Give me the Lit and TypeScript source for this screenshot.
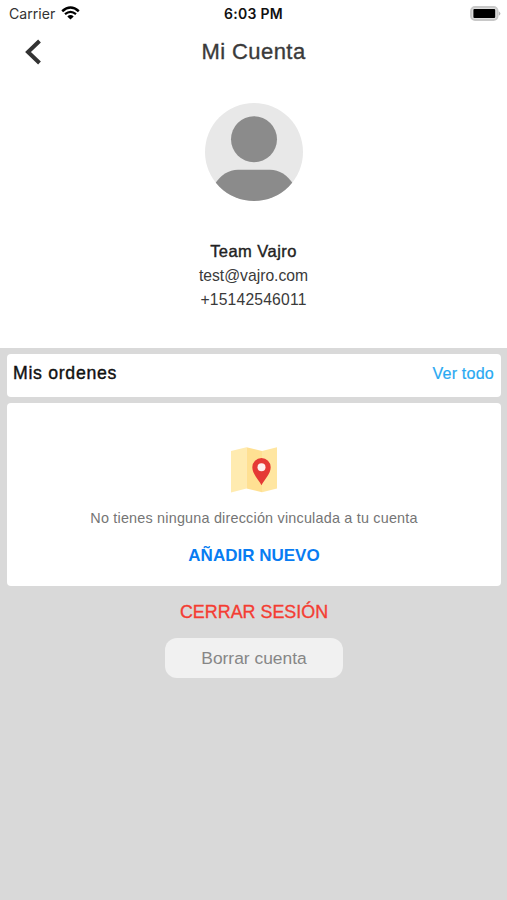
import { LitElement, html, css, svg } from "lit";
import { customElement } from "lit/decorators.js";

const wifi = html`<svg class="wifi" viewBox="0 0 19 14" width="19" height="14">
  ${svg`<path d="M1.2 5.2Q9.5 -2.2 17.8 5.2" fill="none" stroke="#000" stroke-width="2.5"/>
  <path d="M4 8.2Q9.5 3.4 15 8.2" fill="none" stroke="#000" stroke-width="2.2"/>
  <path d="M6.3 10.5Q9.5 7.7 12.7 10.5L9.5 13.6Z" fill="#000"/>`}
</svg>`;

const battery = html`<svg class="battery" viewBox="0 0 31 15" width="31" height="15">
  ${svg`<rect x="1" y="1" width="26.6" height="13" rx="4" fill="#dedede" stroke="#c8c8c8" stroke-width="1.8"/>
  <rect x="3.4" y="3.1" width="21.8" height="8.8" rx="1" fill="#000"/>
  <path d="M28.8 5.2Q32 7.5 28.8 9.8Z" fill="#b5b5b5"/>`}
</svg>`;

const avatar = html`<svg class="avatar" viewBox="0 0 98 98" width="98" height="98">
  ${svg`<defs><clipPath id="disc"><circle cx="49" cy="49" r="49"/></clipPath></defs>
  <circle cx="49" cy="49" r="49" fill="#e8e8e8"/>
  <circle cx="49" cy="36.2" r="23" fill="#8b8b8b"/>
  <path clip-path="url(#disc)" d="M9 82Q19 66.7 33 66.7H65Q79 66.7 89 82V98H9Z" fill="#8b8b8b"/>`}
</svg>`;

const map = html`<svg class="map" viewBox="0 0 46 46" width="46" height="46">
  ${svg`<path d="M0 4L15.5 .3V41.5L0 45.5Z" fill="#ffebb0"/>
  <path d="M15.5 .3L31 4V45.3L15.5 41.5Z" fill="#ffe092"/>
  <path d="M31 4L46 .3V41.5L31 45.3Z" fill="#ffe6a1"/>
  <path d="M30.5 38.3C28 33 21.3 27 21.3 20.3A9.2 9.2 0 0 1 39.7 20.3C39.7 27 33 33 30.5 38.3Z" fill="#e53935"/>
  <circle cx="30.5" cy="20.2" r="4" fill="#fff0ee"/>`}
</svg>`;

@customElement("app-root")
export class AppRoot extends LitElement {
  static styles = css`
    :host {
      display: flex;
      flex-direction: column;
      height: 900px;
      background: #d9d9d9;
      font-family: "Liberation Sans", Arial, sans-serif;
      color: #3a3a3a;
      white-space: nowrap;
    }
    svg { display: block; flex: none; }
    .profile { height: 348px; background: #fff; display: flex; flex-direction: column; }
    .row { display: grid; grid-template-columns: 1fr auto 1fr; align-items: center; }
    .status { height: 27px; font-family: Inter, sans-serif; }
    .carrier { display: flex; align-items: center; gap: 6px; padding-left: 9px; color: #333; font-size: 14.1px; }
    .wifi { margin-top: -2px; }
    .time { color: #111; font-weight: 600; font-size: 14px; letter-spacing: .3px; }
    .battery { justify-self: end; margin-right: 6px; }
    .nav { height: 50px; }
    .back { margin-left: 24px; }
    .title { margin: 0; font-size: 22px; font-weight: 400; letter-spacing: .43px; -webkit-text-stroke: .35px; }
    .person { display: flex; flex-direction: column; align-items: center; text-align: center; }
    .avatar { margin: 26px 0 37.5px; }
    .line { line-height: 24.3px; font-size: 15.7px; }
    .mail { padding-top: 1px; }
    .phone { letter-spacing: .18px; }
    .name { font-size: 16.5px; letter-spacing: .45px; color: #222; -webkit-text-stroke: .4px; }
    .content { padding: 6px 6px 0 7px; display: flex; flex-direction: column; align-items: center; }
    .card { box-sizing: border-box; width: 100%; background: #fff; border-radius: 4px; }
    .orders { height: 43px; padding: 0 7px 4px 6px; display: flex; justify-content: space-between; align-items: center; }
    .heading { margin: 0; font-size: 17.7px; font-weight: 400; letter-spacing: .7px; color: #111; -webkit-text-stroke: .4px; }
    .more { font-size: 16.1px; letter-spacing: .2px; color: #29a9f2; -webkit-text-stroke: .2px; }
    .address { margin-top: 6px; height: 183px; display: flex; flex-direction: column; align-items: center; }
    .map { margin-top: 44px; }
    .empty { margin: 15px 0 0; line-height: 20px; font-size: 14.4px; letter-spacing: .2px; color: #757575; }
    .add { margin-top: 18px; line-height: 20px; font-size: 17px; font-weight: 700; color: #087cf2; }
    .logout { margin-top: 15px; line-height: 22px; font-size: 17.9px; color: #f43d33; -webkit-text-stroke: .35px; }
    .delete { margin-top: 15px; width: 178px; height: 40px; line-height: 41px; text-align: center; border-radius: 12px; background: #f1f1f1; font-size: 17.4px; color: #868686; }
  `;

  render() {
    return html`
      <header class="profile">
        <div class="row status">
          <div class="carrier"><span>Carrier</span>${wifi}</div>
          <span class="time">6:03 PM</span>
          ${battery}
        </div>
        <nav class="row nav">
          <svg class="back" viewBox="0 0 18 28" width="18" height="28">
            <path d="M15.5 3L4 14L15.5 25" fill="none" stroke="#333" stroke-width="4" />
          </svg>
          <h1 class="title">Mi Cuenta</h1>
        </nav>
        <div class="person">
          ${avatar}
          <div class="line name">Team Vajro</div>
          <div class="line mail">test@vajro.com</div>
          <div class="line phone">+15142546011</div>
        </div>
      </header>
      <main class="content">
        <section class="card orders">
          <h2 class="heading">Mis ordenes</h2>
          <span class="more">Ver todo</span>
        </section>
        <section class="card address">
          ${map}
          <p class="empty">No tienes ninguna dirección vinculada a tu cuenta</p>
          <span class="add">AÑADIR NUEVO</span>
        </section>
        <span class="logout">CERRAR SESIÓN</span>
        <div class="delete">Borrar cuenta</div>
      </main>
    `;
  }
}
